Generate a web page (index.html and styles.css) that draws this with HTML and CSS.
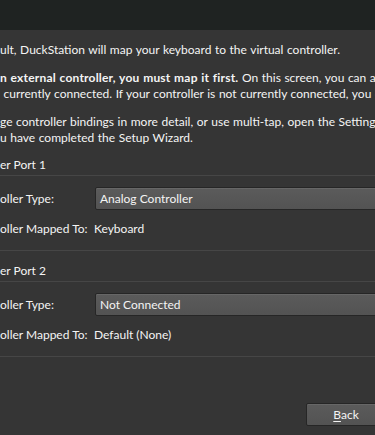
FILE: index.html
```html
<!DOCTYPE html>
<html lang="en">
<head>
  <meta charset="utf-8" />
  <meta name="viewport" content="width=device-width, initial-scale=1.0"/>
  <title>DuckStation Setup Wizard – Controller Setup</title>
  <link rel="stylesheet" href="styles.css">
</head>
<body>

  <div class="wizard">
    <div class="header"></div>

    <div class="page">
      <p class="intro">ult, DuckStation will map your keyboard to the virtual controller.</p>
      <p class="intro"><b>n external controller, you must map it first.</b> On this screen, you can a<br>&nbsp;currently connected. If your controller is not currently connected, you c</p>
      <p class="intro">ge controller bindings in more detail, or use multi-tap, open the Setting<br>u have completed the Setup Wizard.</p>

      <!-- Port 1 -->
      <div class="group">
        <div class="group-title">er Port 1</div>
        <div class="group-body">
          <div class="form-row">
            <span class="label">oller Type:</span>
            <div class="combo">Analog Controller</div>
          </div>
          <div class="form-row">
            <span class="label">oller Mapped To:</span>
            <span class="value">Keyboard</span>
          </div>
        </div>
      </div>

      <!-- Port 2 -->
      <div class="group">
        <div class="group-title">er Port 2</div>
        <div class="group-body">
          <div class="form-row">
            <span class="label">oller Type:</span>
            <div class="combo">Not Connected</div>
          </div>
          <div class="form-row">
            <span class="label">oller Mapped To:</span>
            <span class="value">Default (None)</span>
          </div>
        </div>
      </div>
    </div>

    <div class="footer">
      <button class="btn" type="button"><u>B</u>ack</button>
    </div>
  </div>

</body>
</html>
```

FILE: styles.css
```css
:root {
  --bg:      #353535;
  --header:  #1f2322;
  --text:    #f4f4f4;
  --frame:   #464646;
  --ctl-top: #5b5b5b;
  --ctl-bot: #535353;
  --ctl-edge:#262626;
}
*, *::before, *::after { box-sizing: border-box; margin:0; padding:0; }
html, body { height:100%; }
body {
  background:var(--bg);
  color:var(--text);
  font-family:"Lato","Liberation Sans",sans-serif;
  font-size:12px;
  line-height:16px;
  overflow:hidden;
}

.wizard { display:flex;flex-direction:column;width:460px;height:435px; }
.header { height:30px;background:var(--header);flex:none; }

.page { padding:12px 0 0 0; }
.intro { white-space:nowrap;margin-bottom:12px;word-spacing:0.5px; }
.intro:last-of-type { margin-bottom:11px; }
.intro b { font-weight:700;letter-spacing:0.2px; }

/* group boxes */
.group { margin-bottom:12px; }
.group-title { white-space:nowrap; }
.group-body {
  margin-top:2px;
  border-top:1px solid var(--frame);
  border-bottom:1px solid var(--frame);
  padding:11px 0 10px;
  display:flex;flex-direction:column;gap:7px;
}
.form-row {
  display:grid;
  grid-template-columns:95px 1fr;
  align-items:center;
  height:23px;
  white-space:nowrap;
}
.form-row .value { margin-left:-1px; }

.combo {
  height:23px;
  padding:0 4px;
  line-height:21px;
  border:1px solid var(--ctl-edge);
  border-radius:2px;
  background:linear-gradient(var(--ctl-top),var(--ctl-bot));
  box-shadow:inset 0 1px 0 rgba(255,255,255,0.08);
}

/* footer */
.footer { margin-top:auto;padding:0 0 9px 306px; }
.btn {
  width:80px;height:23px;
  font:inherit;color:var(--text);
  border:1px solid var(--ctl-edge);border-radius:2px;
  background:linear-gradient(var(--ctl-top),var(--ctl-bot));
  box-shadow:inset 0 1px 0 rgba(255,255,255,0.08);
  cursor:pointer;
}
.btn u { text-underline-offset:2px; }
```
